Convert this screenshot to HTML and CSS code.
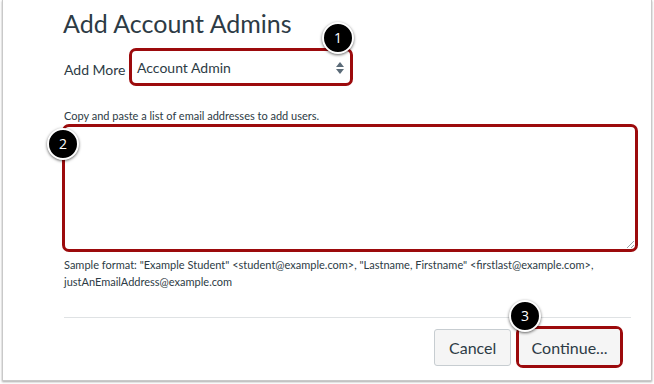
FILE: index.html
```html
<!DOCTYPE html>
<html>
<head>
<meta charset="utf-8">
<link rel="stylesheet" href="styles.css">
</head>
<body>
<div class="panel">
  <h1 class="title">Add Account Admins</h1>
  <div class="row">
    <span class="label">Add More</span>
    <div class="hl hl-select">
      <div class="select">
        <span>Account Admin</span>
        <svg class="arrows" width="8" height="12" viewBox="0 0 8 12"><path d="M4 0 L8 5 L0 5 Z" fill="#5b6b78"/><path d="M0 7 L8 7 L4 12 Z" fill="#5b6b78"/></svg>
      </div>
      <span class="badge b1">1</span>
    </div>
  </div>
  <p class="hint">Copy and paste a list of email addresses to add users.</p>
  <div class="hl hl-area">
    <div class="area"></div>
    <svg class="grip" width="8" height="8" viewBox="0 0 8 8"><path d="M8 1 L1 8 M8 5 L5 8" stroke="#9aa3aa" stroke-width="1"/></svg>
    <span class="badge b2">2</span>
  </div>
  <p class="sample">Sample format: "Example Student" &lt;student@example.com&gt;, "Lastname, Firstname" &lt;firstlast@example.com&gt;,<br>justAnEmailAddress@example.com</p>
  <div class="rule"></div>
  <div class="actions">
    <button class="btn">Cancel</button>
    <div class="hl hl-btn">
      <button class="btn btn-in">Continue...</button>
      <span class="badge b3">3</span>
    </div>
  </div>
</div>
</body>
</html>
```
FILE: styles.css
```css
html, body {
  margin: 0;
  padding: 0;
  background: #ffffff;
}
body {
  width: 654px;
  height: 384px;
  overflow: hidden;
  font-family: Lato, "Open Sans", sans-serif;
  color: #2d3b45;
}
.panel {
  margin-left: 2px;
  width: 650px;
  height: 381px;
  box-sizing: border-box;
  border: 1px solid #c9c9c9;
  border-top: none;
  box-shadow: 0 1px 2px rgba(0,0,0,0.35);
  padding-left: 60px;
  padding-right: 20px;
  position: relative;
}
.title {
  margin: 0;
  padding-top: 8px;
  font-size: 25px;
  line-height: 30px;
  font-weight: 400;
  color: #2d3b45;
}
.row {
  display: flex;
  align-items: center;
  margin-top: 10px;
}
.label {
  font-size: 14px;
  width: 65px;
  padding-left: 1px;
  padding-top: 4px;
}
.hl {
  border: 3px solid #9c0a0c;
  border-radius: 7px;
  position: relative;
  box-sizing: border-box;
}
.hl-select {
  width: 224px;
  height: 38px;
}
.select {
  height: 100%;
  display: flex;
  align-items: center;
  justify-content: space-between;
  padding: 0 6px 0 5px;
  font-size: 14px;
  color: #2d3b45;
}
.arrows {
  margin-top: 2px;
}
.hint {
  margin: 23px 0 0 1px;
  font-size: 11px;
  line-height: 14px;
  color: #2d3b45;
}
.hl-area {
  margin-top: 1px;
  margin-left: -1px;
  width: 576px;
  height: 128px;
}
.grip {
  position: absolute;
  right: 1px;
  bottom: 1px;
}
.sample {
  margin: 4px 0 0 1px;
  font-size: 11px;
  line-height: 17px;
  color: #2d3b45;
}
.rule {
  margin-top: 27px;
  margin-left: 1px;
  width: 567px;
  height: 1px;
  background: #dfe2e4;
}
.actions {
  display: flex;
  justify-content: flex-end;
  align-items: center;
  gap: 5px;
  margin-top: 8px;
  width: 560px;
}
.btn {
  font-family: Lato, "Open Sans", sans-serif;
  font-size: 16px;
  color: #2d3b45;
  background: #f5f5f5;
  border: 1px solid #c7cdd1;
  border-radius: 3px;
  height: 37px;
  padding: 0 14px;
  box-sizing: border-box;
  width: 77px;
}
.hl-btn {
  width: 107px;
  height: 42px;
  padding: 0;
}
.btn-in {
  width: 101px;
  height: 36px;
  border: none;
  border-radius: 3px;
  padding: 0;
}
.badge {
  position: absolute;
  width: 28px;
  height: 28px;
  border-radius: 50%;
  background: #000;
  border: 2px solid #fff;
  box-shadow: 0 1px 3px rgba(0,0,0,0.6);
  color: #fff;
  font-family: "Open Sans", sans-serif;
  font-size: 14px;
  line-height: 28px;
  text-align: center;
}
.b1 { right: -4px; top: -29px; }
.b2 { left: -18px; top: 1px; }
.b3 { left: -10px; top: -29px; }
```
